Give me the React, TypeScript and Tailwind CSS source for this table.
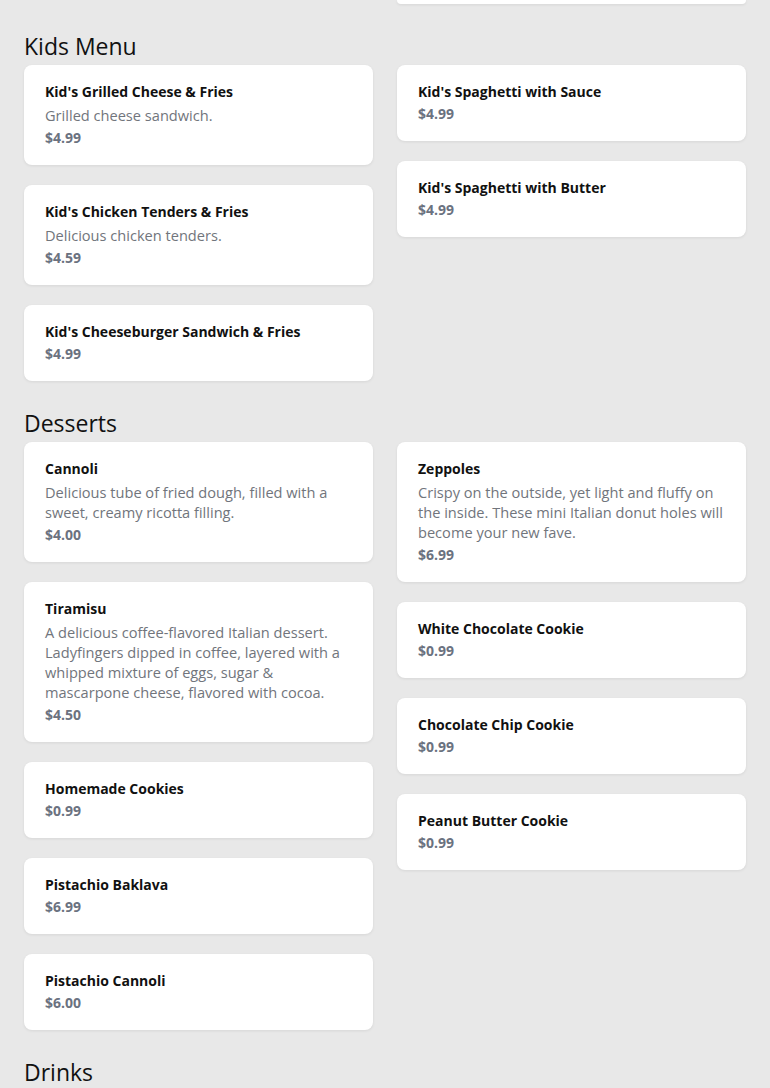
import React from "react";

type Item = { name: string; desc?: string; price: string };

const Card = ({ item }: { item: Item }) => (
  <div className="rounded-lg bg-white px-[21px] py-4 shadow-[0_1px_3px_rgba(0,0,0,0.08)]">
    <div className="text-[14px] font-bold leading-[22px] text-[#111111]">{item.name}</div>
    {item.desc && (
      <div className="my-[2px] text-[14.6px] leading-[20px] text-[#71757c]">{item.desc}</div>
    )}
    <div className="text-[14px] font-bold leading-[22px] text-[#6b7280]">{item.price}</div>
  </div>
);

const Section = ({ title, left, right }: { title: string; left: Item[]; right: Item[] }) => (
  <section className="pt-[26px]">
    <h2 className="mb-[3px] text-[23px] leading-[32px] text-[#111111]">{title}</h2>
    <div className="grid grid-cols-2 gap-6">
      <div className="flex flex-col gap-5">
        {left.map((it) => (
          <Card key={it.name} item={it} />
        ))}
      </div>
      <div className="flex flex-col gap-5">
        {right.map((it) => (
          <Card key={it.name} item={it} />
        ))}
      </div>
    </div>
  </section>
);

export default function App() {
  return (
    <div
      className="min-h-[1088px] bg-[#e8e8e8] px-6"
      style={{ fontFamily: '"Open Sans", "Noto Sans", sans-serif' }}
    >
      <div className="grid grid-cols-2 gap-6">
        <div />
        <div className="h-[4px] rounded-b-lg bg-white shadow-[0_1px_3px_rgba(0,0,0,0.08)]" />
      </div>
      <Section
        title="Kids Menu"
        left={[
          { name: "Kid's Grilled Cheese & Fries", desc: "Grilled cheese sandwich.", price: "$4.99" },
          { name: "Kid's Chicken Tenders & Fries", desc: "Delicious chicken tenders.", price: "$4.59" },
          { name: "Kid's Cheeseburger Sandwich & Fries", price: "$4.99" },
        ]}
        right={[
          { name: "Kid's Spaghetti with Sauce", price: "$4.99" },
          { name: "Kid's Spaghetti with Butter", price: "$4.99" },
        ]}
      />
      <Section
        title="Desserts"
        left={[
          {
            name: "Cannoli",
            desc: "Delicious tube of fried dough, filled with a sweet, creamy ricotta filling.",
            price: "$4.00",
          },
          {
            name: "Tiramisu",
            desc: "A delicious coffee-flavored Italian dessert. Ladyfingers dipped in coffee, layered with a whipped mixture of eggs, sugar & mascarpone cheese, flavored with cocoa.",
            price: "$4.50",
          },
          { name: "Homemade Cookies", price: "$0.99" },
          { name: "Pistachio Baklava", price: "$6.99" },
          { name: "Pistachio Cannoli", price: "$6.00" },
        ]}
        right={[
          {
            name: "Zeppoles",
            desc: "Crispy on the outside, yet light and fluffy on the inside. These mini Italian donut holes will become your new fave.",
            price: "$6.99",
          },
          { name: "White Chocolate Cookie", price: "$0.99" },
          { name: "Chocolate Chip Cookie", price: "$0.99" },
          { name: "Peanut Butter Cookie", price: "$0.99" },
        ]}
      />
      <Section title="Drinks" left={[]} right={[]} />
    </div>
  );
}
